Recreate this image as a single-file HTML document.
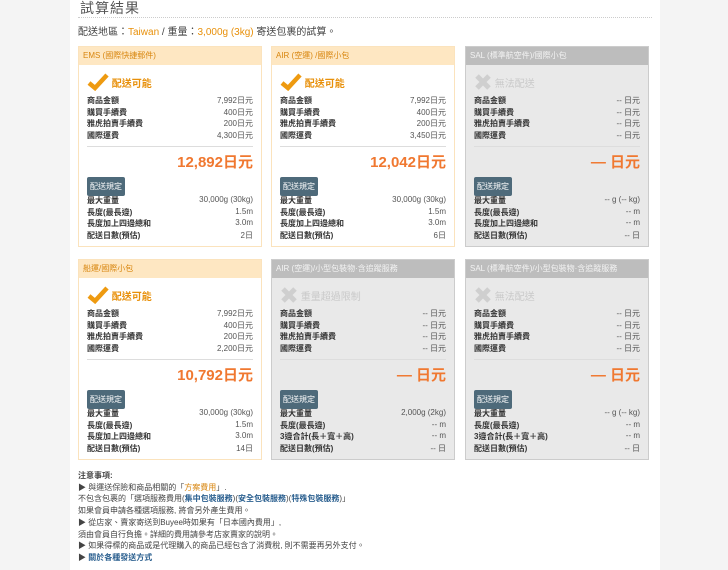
<!DOCTYPE html>
<html><head><meta charset="utf-8"><style>
body{margin:0;background:#f4f4f4;font-family:"Liberation Sans","Noto Sans CJK TC",sans-serif;}
#wrap{position:absolute;left:70px;top:0;width:590px;height:570px;background:#fff;}
h1{position:absolute;left:10px;top:-2px;margin:0;font-size:14px;font-weight:normal;color:#555;letter-spacing:1px}
.hr{position:absolute;left:8px;top:17px;width:574px;border-top:1px dotted #ccc}
.sub{position:absolute;left:8px;top:23px;font-size:10px;color:#444}
.sub b{color:#e8900a;font-weight:normal}
.card{position:absolute;width:184px;height:201px;border:1px solid #fbe3bd;background:#fff;box-sizing:border-box}
.card .hd{height:18px;background:#fee7c2;color:#d8860f;font-size:8px;line-height:18px;padding-left:4px}
.card.off{background:#e9e9e9;border-color:#ccc}
.card.off .hd{background:#bdbdbd;color:#f3f3f3}
.st{position:absolute;left:8px;top:26px;font-size:10px;color:#e8900a;font-weight:bold;display:flex;align-items:center}
.off .st{color:#c9c9c9}
.row{position:absolute;left:8px;right:8px;font-size:8px;color:#333;font-weight:bold;height:12px}
.row span{float:right;font-weight:normal;color:#555}
.sep{position:absolute;left:8px;right:8px;top:99px;border-top:1px solid #ddd}
.tot{position:absolute;right:8px;top:104px;font-size:15px;color:#f07830;font-weight:bold}
.btn{position:absolute;left:8px;top:130px;background:#4e6a7a;color:#fff;font-size:8px;padding:4px 3px;border-radius:2px}
.notes{position:absolute;left:8px;top:470px;font-size:8px;color:#444;line-height:11.7px}
.notes a{color:#2a5f8f;font-weight:bold}
.notes .o{color:#d8860f}
</style></head><body>
<div id="wrap">
<h1>試算結果</h1><div class="hr"></div>
<div class="sub">配送地區：<b>Taiwan</b> / 重量：<b>3,000g (3kg)</b> 寄送包裹的試算。</div>
</div>
<div id="cards"></div>
<script>
const cards=[
[78,46,"EMS (國際快捷郵件)",1,["7,992日元","400日元","200日元","4,300日元"],"12,892日元",["30,000g (30kg)","1.5m","3.0m","2日"],"長度加上四邊總和"],
[271,46,"AIR (空運) /國際小包",1,["7,992日元","400日元","200日元","3,450日元"],"12,042日元",["30,000g (30kg)","1.5m","3.0m","6日"],"長度加上四邊總和"],
[465,46,"SAL (標準航空件)/國際小包",0,["-- 日元","-- 日元","-- 日元","-- 日元"],"— 日元",["-- g (-- kg)","-- m","-- m","-- 日"],"長度加上四邊總和","無法配送"],
[78,259,"船運/國際小包",1,["7,992日元","400日元","200日元","2,200日元"],"10,792日元",["30,000g (30kg)","1.5m","3.0m","14日"],"長度加上四邊總和"],
[271,259,"AIR (空運)/小型包裝物·含追蹤服務",0,["-- 日元","-- 日元","-- 日元","-- 日元"],"— 日元",["2,000g (2kg)","-- m","-- m","-- 日"],"3邊合計(長＋寬＋高)","重量超過限制"],
[465,259,"SAL (標準航空件)/小型包裝物·含追蹤服務",0,["-- 日元","-- 日元","-- 日元","-- 日元"],"— 日元",["-- g (-- kg)","-- m","-- m","-- 日"],"3邊合計(長＋寬＋高)","無法配送"]];
const L1=["商品金額","購買手續費","雅虎拍賣手續費","國際運費"],L2=["最大重量","長度(最長邊)","","配送日數(預估)"];
let h="";
for(const c of cards){
 let s=`<div class="card ${c[3]?"":"off"}" style="left:${c[0]}px;top:${c[1]}px"><div class="hd">${c[2]}</div>`;
 s+= c[3]?`<div class="st"><svg width="22" height="18" viewBox="0 0 22 18"><path d="M2 10 L8 15 L20 2" stroke="#ee9a10" stroke-width="4.5" fill="none"/></svg>&nbsp;配送可能</div>`
  :`<div class="st"><svg width="18" height="18" viewBox="0 0 18 18"><path d="M3 3L15 15M15 3L3 15" stroke="#cfcfcf" stroke-width="5"/></svg>&nbsp;<span style="font-weight:normal">${c[8]}</span></div>`;
 for(let i=0;i<4;i++) s+=`<div class="row" style="top:${48+i*11.7}px">${L1[i]}<span>${c[4][i]}</span></div>`;
 s+=`<div class="sep"></div><div class="tot">${c[5]}</div><div class="btn">配送規定</div>`;
 for(let i=0;i<4;i++) s+=`<div class="row" style="top:${148+i*11.7}px">${i==2?c[7]:L2[i]}<span>${c[6][i]}</span></div>`;
 h+=s+"</div>";
}
document.getElementById("cards").innerHTML=h;
</script>
<div class="notes" style="left:78px">
<b>注意事項:</b><br>
▶ 與運送保險和商品相關的「<span class="o">方案費用</span>」.<br>
不包含包裹的「選項服務費用(<a>集中包裝服務</a>)(<a>安全包裝服務</a>)(<a>特殊包裝服務</a>)」<br>
如果會員申請各種選項服務, 將會另外產生費用。<br>
▶ 從店家、賣家寄送到Buyee時如果有「日本國內費用」,<br>
須由會員自行負擔。詳細的費用請參考店家賣家的說明。<br>
▶ 如果得標的商品或是代理購入的商品已經包含了消費稅, 則不需要再另外支付。<br>
▶ <a>關於各種發送方式</a>
</div>
</body></html>
